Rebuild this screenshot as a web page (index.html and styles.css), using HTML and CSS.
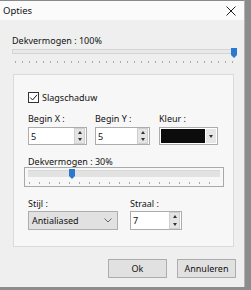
FILE: index.html
```html
<!DOCTYPE html>
<html lang="nl">
<head>
  <meta charset="UTF-8" />
  <title>Opties</title>
  <link rel="stylesheet" href="styles.css">
</head>
<body>
  <div class="window">
    <div class="titlebar">
      <span class="title">Opties</span>
      <svg class="close" width="10" height="10" viewBox="0 0 10 10">
        <path d="M0.5 0.5 L9.5 9.5 M9.5 0.5 L0.5 9.5" stroke="#222" stroke-width="1" fill="none"/>
      </svg>
    </div>

    <div class="content">
      <div class="label label-top">Dekvermogen : 100%</div>
      <div class="slider">
        <div class="track"></div>
        <svg class="thumb" style="left: 219px" width="6" height="10" viewBox="0 0 6 10">
          <path d="M0 0 H6 V7 L3 10 L0 7 Z" fill="#2a78d0"/>
        </svg>
        <div class="ticks"></div>
      </div>

      <div class="group">
        <div class="check">
          <span class="box">
            <svg width="9" height="9" viewBox="0 0 9 9">
              <path d="M1.2 4.5 L3.6 7 L8 1.8" stroke="#222" stroke-width="1" fill="none"/>
            </svg>
          </span>
          Slagschaduw
        </div>

        <div class="fields">
          <div class="field w-x">
            <div class="label">Begin X :</div>
            <div class="spin">
              <span class="val">5</span>
              <span class="arrows"><i class="up"></i><i class="down"></i></span>
            </div>
          </div>
          <div class="field w-y">
            <div class="label">Begin Y :</div>
            <div class="spin">
              <span class="val">5</span>
              <span class="arrows"><i class="up"></i><i class="down"></i></span>
            </div>
          </div>
          <div class="field w-kleur">
            <div class="label">Kleur :</div>
            <div class="colorpick">
              <span class="swatch"></span>
              <span class="drop"><i class="down"></i></span>
            </div>
          </div>
        </div>

        <div class="label label-opacity">Dekvermogen : 30%</div>
        <div class="slider-box">
          <div class="track-thick"></div>
          <svg class="thumb" style="left: 44px; top: 1px" width="6" height="10" viewBox="0 0 6 10">
            <path d="M0 0 H6 V7 L3 10 L0 7 Z" fill="#2a78d0"/>
          </svg>
          <div class="ticks ticks-wide"></div>
        </div>

        <div class="fields fields-last">
          <div class="field w-stijl">
            <div class="label">Stijl :</div>
            <div class="select">
              <span>Antialiased</span>
              <svg width="8" height="5" viewBox="0 0 8 5">
                <path d="M0.5 0.5 L4 4 L7.5 0.5" stroke="#666" stroke-width="1" fill="none"/>
              </svg>
            </div>
          </div>
          <div class="field w-straal">
            <div class="label">Straal :</div>
            <div class="spin">
              <span class="val">7</span>
              <span class="arrows"><i class="up"></i><i class="down"></i></span>
            </div>
          </div>
        </div>
      </div>

      <div class="buttons">
        <button class="btn">Ok</button>
        <button class="btn">Annuleren</button>
      </div>
    </div>
  </div>
</body>
</html>
```

FILE: styles.css
```css
html {
  background: linear-gradient(to bottom, #8c8c8c 0 287px, #2e2e2e 287px);
}

body {
  margin: 0;
  font-family: 'Noto Sans', sans-serif;
  font-size: 9px;
  color: #111;
}

.window {
  width: 245px;
  height: 287px;
  background: #efefef;
  border-top: 1px solid #8a8a8a;
  border-right: 1px solid #b4b4b4;
  box-sizing: border-box;
}

.titlebar {
  height: 19px;
  background: #fbfbfb;
  display: flex;
  align-items: center;
  justify-content: space-between;
  padding: 0 8px 0 3px;
}

.title {
  line-height: 19px;
  font-size: 9.5px;
}

.content {
  padding-left: 12px;
}

.label {
  line-height: 16px;
  white-space: nowrap;
}

.label-top {
  margin-top: 14px;
  line-height: 14px;
}

.slider {
  position: relative;
  width: 222px;
  height: 16px;
}

.track {
  height: 3px;
  margin-top: 1px;
  background: #e7e9ea;
  border: 1px solid #d4d4d4;
}

.thumb {
  position: absolute;
  top: -1px;
}

.ticks {
  position: absolute;
  left: 3px;
  top: 12px;
  width: 218px;
  height: 2px;
  background: repeating-linear-gradient(to right, #aaa 0 1px, transparent 1px 7px);
}

.group {
  margin: 9px 0 0 1px;
  width: 221px;
  box-sizing: border-box;
  background: #f7f7f7;
  border: 1px solid #dadada;
  padding: 16px 14px 16px 14px;
}

.check {
  display: flex;
  align-items: center;
  gap: 3px;
  height: 13px;
}

.box {
  width: 9px;
  height: 9px;
  border: 1px solid #333;
  background: #fff;
  display: flex;
}

.fields {
  display: flex;
  margin-top: 7px;
}

.w-x { width: 59px; margin-right: 8px; }
.w-y { width: 55px; margin-right: 9px; }
.w-kleur { width: 59px; }
.w-stijl { width: 90px; margin-right: 12px; }
.w-straal { width: 52px; }

.spin {
  height: 18px;
  box-sizing: border-box;
  border: 1px solid #acacac;
  background: #fff;
  display: flex;
  justify-content: space-between;
  align-items: center;
  padding-left: 2px;
}

.arrows {
  width: 9px;
  height: 14px;
  margin-right: 1px;
  background: #e4e4e4;
  border: 1px solid #d0d0d0;
  display: flex;
  flex-direction: column;
  justify-content: space-around;
  align-items: center;
}

.up, .down {
  display: block;
  width: 0;
  height: 0;
  border-left: 2.5px solid transparent;
  border-right: 2.5px solid transparent;
}

.up {
  border-bottom: 3px solid #333;
}

.down {
  border-top: 3px solid #333;
}

.colorpick {
  height: 18px;
  box-sizing: border-box;
  border: 1px solid #acacac;
  background: #fff;
  display: flex;
  padding: 1px;
  gap: 1px;
}

.swatch {
  width: 44px;
  background: #0c0c0c;
}

.drop {
  flex: 1;
  background: #e6e6e6;
  display: flex;
  align-items: center;
  justify-content: center;
}

.label-opacity {
  margin-top: 11px;
  line-height: 11px;
}

.slider-box {
  position: relative;
  margin-left: -4px;
  width: 200px;
  height: 20px;
  box-sizing: border-box;
  border: 1px solid #a9a9a9;
}

.track-thick {
  margin: 2px 0 0 3px;
  width: 192px;
  height: 7px;
  background: #e2e2e2;
  border-top: 1px solid #d8d8d8;
  box-sizing: border-box;
}

.ticks-wide {
  left: 4px;
  top: 14px;
  width: 190px;
  background: repeating-linear-gradient(to right, #a8a8a8 0 1px, transparent 1px 10px);
}

.fields-last {
  margin-top: 10px;
}

.fields-last .label {
  line-height: 14px;
}

.select {
  height: 19px;
  box-sizing: border-box;
  border: 1px solid #adadad;
  background: #e1e1e1;
  display: flex;
  align-items: center;
  justify-content: space-between;
  padding: 0 5px 0 3px;
}

.fields-last .spin {
  height: 19px;
}

.fields-last .arrows {
  height: 15px;
}

.buttons {
  display: flex;
  justify-content: flex-end;
  gap: 10px;
  margin: 12px 8px 0 0;
}

.btn {
  width: 59px;
  height: 19px;
  padding: 0;
  border: 1px solid #adadad;
  background: #e1e1e1;
  font-family: 'Noto Sans', sans-serif;
  font-size: 9px;
  color: #111;
}
```
